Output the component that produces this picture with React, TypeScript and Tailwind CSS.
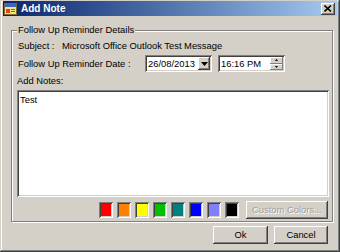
import React from "react";

const raised =
  "shadow-[inset_-1px_-1px_0_#404040,inset_1px_1px_0_#ffffff,inset_-2px_-2px_0_#808080,inset_2px_2px_0_#d4d0c8]";
const raisedLight =
  "shadow-[inset_-1px_-1px_0_#808080,inset_1px_1px_0_#ffffff]";
const sunken =
  "shadow-[inset_1px_1px_0_#808080,inset_-1px_-1px_0_#ffffff,inset_2px_2px_0_#404040,inset_-2px_-2px_0_#d4d0c8]";

function Swatch({ color }: { color: string }) {
  return (
    <div className={`w-[14px] h-[16px] p-[2px] ${sunken}`}>
      <div className="w-full h-full" style={{ backgroundColor: color }} />
    </div>
  );
}

export default function App() {
  const colors = ["#ff0000", "#ff8000", "#ffff00", "#00c000", "#008080", "#0000ff", "#8080ff", "#000000"];
  return (
    <div
      className={`w-[340px] h-[252px] overflow-hidden bg-[#d4d0c8] text-black font-['Liberation_Sans',Arial,sans-serif] text-[9.4px] leading-none pt-[1px] px-[3px] flex flex-col shadow-[inset_-1px_-1px_0_#404040,inset_1px_1px_0_#d4d0c8,inset_-2px_-2px_0_#808080,inset_2px_2px_0_#ffffff]`}
    >
      {/* Title bar */}
      <div className="h-[15px] flex items-center bg-gradient-to-r from-[#0a246a] to-[#a6caf0] pl-[1px] pr-[2px]">
        <svg width="13" height="12" viewBox="0 0 13 12" className="shrink-0">
          <rect x="0.5" y="0.5" width="12" height="11" fill="#f4e27a" stroke="#7a6a30" />
          <rect x="1" y="1" width="11" height="3" fill="#3a64c8" />
          <rect x="2" y="6" width="4" height="4" fill="#e04028" />
          <rect x="7" y="6" width="4" height="1" fill="#4070c0" />
          <rect x="7" y="8" width="4" height="1" fill="#4070c0" />
        </svg>
        <span className="ml-[4px] text-white font-bold text-[10px]">Add Note</span>
        <div className="flex-1" />
        <div className={`w-[14px] h-[12px] bg-[#d4d0c8] flex items-center justify-center ${raised}`}>
          <svg width="8" height="7" viewBox="0 0 8 7">
            <path d="M0.5 0.5 L7 6.5 M7 0.5 L0.5 6.5" stroke="#000" strokeWidth="1.6" />
          </svg>
        </div>
      </div>

      {/* Group box */}
      <div className="relative ml-[8px] mt-[14px] w-[322px] h-[192px] border border-[#808080] shadow-[1px_1px_0_#ffffff,inset_1px_1px_0_#ffffff] flex flex-col pl-[5px]">
        <span className="absolute left-[5px] top-[-6px] px-[1px] bg-[#d4d0c8] text-[#000]">
          Follow Up Reminder Details
        </span>
        <div className="h-[14px] mt-[8px] flex items-center pl-[1px]">
          <span className="w-[44px]">Subject :</span>
          <span>Microsoft Office Outlook Test Message</span>
        </div>
        <div className="h-[17px] mt-[2px] flex items-center pl-[1px]">
          <span className="w-[127px] pt-[1px]">Follow Up Reminder Date :</span>
          <div className={`w-[67px] h-[17px] bg-white flex items-center pl-[3px] pr-[2px] ${sunken}`}>
            <span className="flex-1">26/08/2013</span>
            <div className={`w-[12px] h-[13px] bg-[#d4d0c8] flex items-center justify-center ${raised}`}>
              <svg width="7" height="4" viewBox="0 0 7 4">
                <path d="M0 0 H7 L3.5 4 Z" fill="#000" />
              </svg>
            </div>
          </div>
          <div className={`ml-[6px] w-[67px] h-[17px] bg-white flex items-center pl-[3px] pr-[2px] ${sunken}`}>
            <span className="flex-1">16:16 PM</span>
            <div className="w-[13px] h-[13px] flex flex-col">
              <div className={`h-[6.5px] bg-[#d4d0c8] flex items-center justify-center ${raisedLight}`}>
                <svg width="3" height="2" viewBox="0 0 3 2">
                  <path d="M0 2 H3 L1.5 0 Z" fill="#000" />
                </svg>
              </div>
              <div className={`h-[6.5px] bg-[#d4d0c8] flex items-center justify-center ${raisedLight}`}>
                <svg width="3" height="2" viewBox="0 0 3 2">
                  <path d="M0 0 H3 L1.5 2 Z" fill="#000" />
                </svg>
              </div>
            </div>
          </div>
        </div>
        <div className="h-[14px] mt-[2px] flex items-center">
          <span>Add Notes:</span>
        </div>
        <div className={`w-[312px] h-[107px] mt-[2px] bg-white px-[3px] pt-[5px] ${sunken}`}>
          Test
        </div>
        <div className="h-[18px] mt-[4px] flex items-center pl-[82px]">
          <div className="flex items-center gap-[4px]">
            {colors.map((c) => (
              <Swatch key={c} color={c} />
            ))}
          </div>
          <div className={`ml-[7px] w-[82px] h-[18px] flex items-center justify-center text-[#a0a0a0] [text-shadow:1px_1px_0_#ffffff] ${raised}`}>
            Custom Colors...
          </div>
        </div>
      </div>

      {/* Buttons */}
      <div className="flex mt-[4px] pl-[210px] gap-[6px]">
        <div className={`w-[55px] h-[18px] flex items-center justify-center ${raised}`}>Ok</div>
        <div className={`w-[54px] h-[18px] flex items-center justify-center ${raised}`}>Cancel</div>
      </div>
    </div>
  );
}
